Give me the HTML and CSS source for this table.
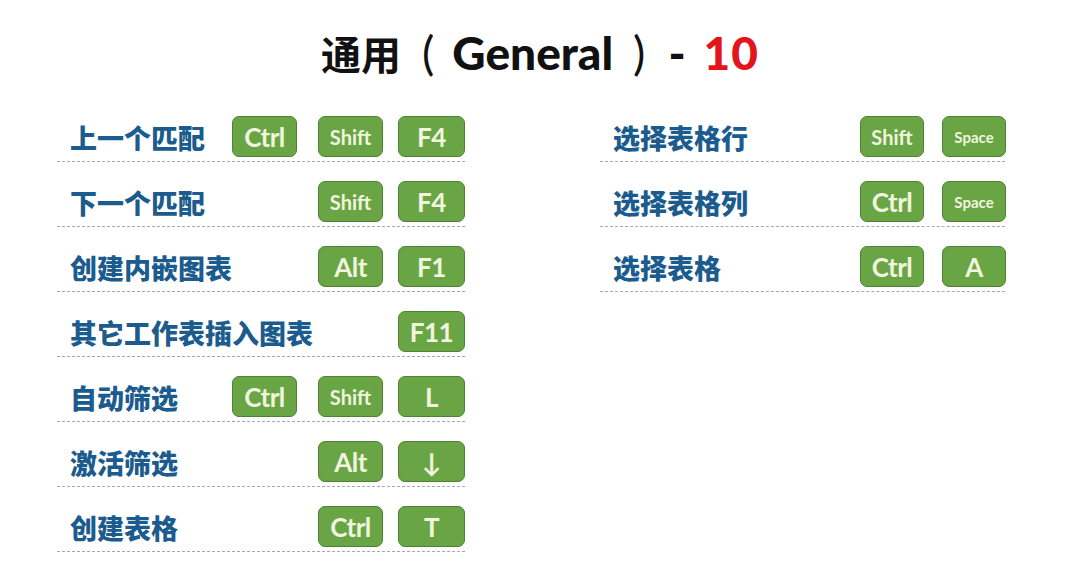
FILE: index.html
```html
<!DOCTYPE html>
<html lang="zh-CN">
<head>
<meta charset="utf-8">
<title>通用（General）- 10</title>
<link rel="stylesheet" href="styles.css">
</head>
<body>
<div class="page">
  <h1 class="title"><span class="cn">通用</span><span class="paren pl">(</span><span class="en">General</span><span class="paren pr">)</span><span class="dash">-</span><span class="num">10</span></h1>
  <div class="cols">
    <div class="col col-left">
      <div class="row"><span class="label">上一个匹配</span><span class="key k1">Ctrl</span><span class="key k2 sm">Shift</span><span class="key k3">F4</span></div>
      <div class="row"><span class="label">下一个匹配</span><span class="key k2 sm">Shift</span><span class="key k3">F4</span></div>
      <div class="row"><span class="label">创建内嵌图表</span><span class="key k2">Alt</span><span class="key k3">F1</span></div>
      <div class="row"><span class="label">其它工作表插入图表</span><span class="key k3">F11</span></div>
      <div class="row"><span class="label">自动筛选</span><span class="key k1">Ctrl</span><span class="key k2 sm">Shift</span><span class="key k3">L</span></div>
      <div class="row"><span class="label">激活筛选</span><span class="key k2">Alt</span><span class="key k3">↓</span></div>
      <div class="row"><span class="label">创建表格</span><span class="key k2">Ctrl</span><span class="key k3">T</span></div>
    </div>
    <div class="col col-right">
      <div class="row"><span class="label">选择表格行</span><span class="key k1 sm">Shift</span><span class="key k2 xs">Space</span></div>
      <div class="row"><span class="label">选择表格列</span><span class="key k1">Ctrl</span><span class="key k2 xs">Space</span></div>
      <div class="row"><span class="label">选择表格</span><span class="key k1">Ctrl</span><span class="key k2">A</span></div>
    </div>
  </div>
</div>
</body>
</html>
```

FILE: styles.css
```css
* { box-sizing: border-box; }
html, body { margin: 0; padding: 0; background: #ffffff; }
.page { width: 1080px; height: 573px; overflow: hidden; }
.title {
  margin: 0;
  height: 97px;
  padding-top: 23px;
  display: flex;
  justify-content: center;
  align-items: baseline;
  font-family: Lato, sans-serif;
  font-weight: 900;
  font-size: 46px;
  line-height: 60px;
  color: #111111;
}
.cn { font-family: "Noto Sans CJK SC", sans-serif; font-weight: 700; font-size: 40px; }
.paren { font-weight: 400; font-size: 46px; }
.pl { margin-left: 21px; }
.en { margin-left: 18px; }
.pr { margin-left: 20px; }
.dash { margin-left: 23px; }
.num { margin-left: 18px; color: #e3141b; letter-spacing: 1px; }
.cols { display: flex; }
.col-left { margin-left: 57px; width: 408px; }
.col-right { margin-left: 135px; width: 405px; }
.row {
  display: grid;
  height: 65px;
  align-items: end;
  padding-bottom: 4px;
  border-bottom: 1px dashed #a8a8a8;
}
.col-left .row { grid-template-columns: 175px 86px 80px 67px; }
.col-right .row { grid-template-columns: 260px 82px 63px; }
.label {
  grid-column: 1;
  grid-row: 1;
  align-self: center;
  margin-top: 22px;
  padding-left: 13px;
  white-space: nowrap;
  font-family: "Noto Sans CJK SC", sans-serif;
  font-weight: 900;
  font-size: 27px;
  line-height: 32px;
  color: #1b5b8d;
}
.key {
  grid-row: 1;
  height: 41px;
  width: 65px;
  display: flex;
  align-items: center;
  justify-content: center;
  background: #6aa545;
  border: 1px solid #4f8233;
  border-radius: 7px;
  color: #f0f5df;
  font-family: Lato, "Open Sans", sans-serif;
  font-weight: 700;
  font-size: 26px;
  letter-spacing: -0.5px;
}
.k1 { grid-column: 2; }
.k2 { grid-column: 3; }
.k3 { grid-column: 4; width: 67px; }
.col-right .key { width: 64px; }
.key.sm { font-size: 20px; letter-spacing: 0; }
.key.xs { font-size: 15px; letter-spacing: 0; }
```
